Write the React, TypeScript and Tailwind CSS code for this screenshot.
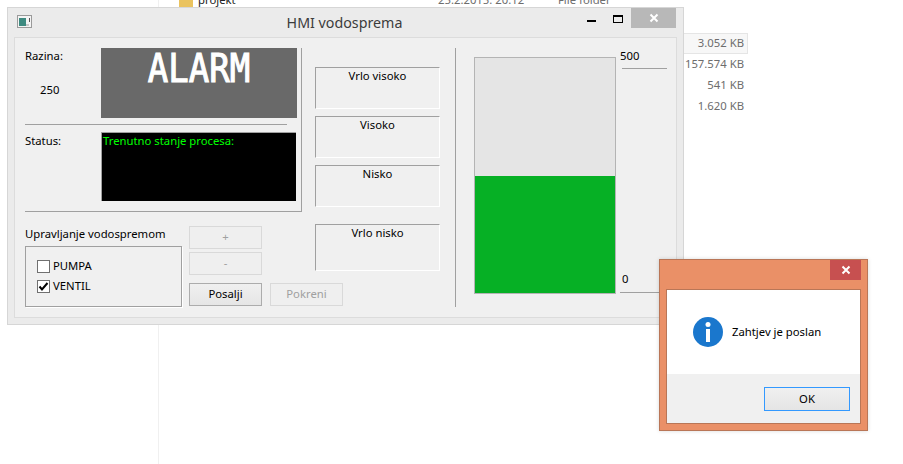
import React from "react";

const Frame = ({ label, h, className = "" }: { label: string; h: string; className?: string }) => (
  <div className={`w-[125px] ${h} border-t border-l border-t-[#a0a0a0] border-l-[#a0a0a0] border-r border-b border-r-white border-b-white text-center leading-[16px] ${className}`}>
    {label}
  </div>
);

const Btn = ({ children, disabled, className = "" }: { children: React.ReactNode; disabled?: boolean; className?: string }) => (
  <div
    className={`w-[73px] h-[23px] flex items-center justify-center border ${
      disabled ? "border-[#d9d9d9] text-[#a0a0a0] bg-[#efefef]" : "border-[#acacac] bg-gradient-to-b from-[#f0f0f0] to-[#e5e5e5] text-black"
    } ${className}`}
  >
    {children}
  </div>
);

const Check = ({ label, checked }: { label: string; checked?: boolean }) => (
  <div className="flex items-center h-[20px]">
    <div className="w-[13px] h-[13px] border border-[#707070] bg-white flex items-center justify-center mr-[3px]">
      {checked && (
        <svg width="11" height="11" viewBox="0 0 11 11">
          <path d="M1.5 5.5 L4 8.5 L9.5 2" fill="none" stroke="#000" strokeWidth="2" />
        </svg>
      )}
    </div>
    <span>{label}</span>
  </div>
);

export default function App() {
  return (
    <div className="relative w-[903px] h-[464px] bg-white overflow-hidden text-[11.3px] text-black font-['Noto_Sans','Open_Sans',sans-serif]">
      {/* explorer behind */}
      <div className="absolute left-[158px] top-0 bottom-0 w-px bg-[#f0f0f0]" />
      <div className="absolute left-[179px] top-[-3px] w-[14px] h-[10px] bg-[#eac35f]" />
      <div className="absolute left-[198px] top-[-8px] leading-[16px] text-[#222]">projekt</div>
      <div className="absolute left-[438px] top-[-8px] leading-[16px] text-[#6d6d6d]">25.2.2015. 20:12</div>
      <div className="absolute left-[558px] top-[-8px] leading-[16px] text-[#6d6d6d]">File folder</div>
      <div className="absolute left-[684px] top-[33px] w-[64px] flex flex-col items-end text-[#6d6d6d] leading-[21px]">
        <div className="w-full h-[21px] text-right pr-[3px] bg-[#f7f7f7] border border-l-0 border-[#e5e5e5] leading-[17px]">3.052 KB</div>
        <div className="pr-[4px] whitespace-nowrap -mt-px">157.574 KB</div>
        <div className="pr-[4px]">541 KB</div>
        <div className="pr-[4px]">1.620 KB</div>
      </div>

      {/* main window */}
      <div className="absolute left-[7px] top-[7px] w-[677px] h-[318px] border border-[#d6d6d6] bg-[#ebebeb] flex flex-col">
        <div className="h-[29px] flex items-start relative shrink-0">
          <svg className="absolute left-[9px] top-[7px]" width="16" height="14" viewBox="0 0 16 14">
            <rect x="0.5" y="0.5" width="14" height="12" fill="#f4f4f4" stroke="#9a9a9a" />
            <rect x="2" y="3" width="7" height="8" fill="#3d8a80" />
            <rect x="9" y="9" width="3" height="2" fill="#c8c8c8" />
            <rect x="12" y="3" width="1" height="4" fill="#555" />
          </svg>
          <div className="w-full text-center text-[14.25px] leading-[29px] text-[#3c3c3c] pr-[2px]">HMI vodosprema</div>
          <div className="absolute left-[579px] top-[12px] w-[9px] h-[2px] bg-black" />
          <div className="absolute left-[605px] top-[7px] w-[10px] h-[8px] border border-black border-t-2" />
          <div className="absolute left-[623px] top-0 w-[45px] h-[20px] bg-[#b8b8b8] flex items-center justify-center">
            <svg width="10" height="10" viewBox="0 0 10 10">
              <path d="M1.5 1.5 L8.5 8.5 M8.5 1.5 L1.5 8.5" stroke="#fff" strokeWidth="2" />
            </svg>
          </div>
        </div>

        <div className="mx-[6px] h-[281px] border border-[#dcdcdc] bg-[#f0f0f0] flex pl-[10px] pt-[10px]">
          {/* left + middle */}
          <div className="w-[415px] flex flex-col shrink-0">
            <div className="flex h-[176px]">
              <div className="w-[277px] h-[164px] border-r border-b border-[#a0a0a0] shrink-0">
                <div className="flex h-[70px]">
                  <div className="w-[76px] shrink-0 flex flex-col">
                    <div className="leading-[16px]">Razina:</div>
                    <div className="mt-[18px] pl-[15px] leading-[16px]">250</div>
                  </div>
                  <div className="w-[196px] h-[70px] bg-[#696969] flex justify-center overflow-hidden">
                    <span className="text-white text-[34px] leading-[34px] mt-px h-[34px] [-webkit-text-stroke:1px_white] font-['DejaVu_Sans_Mono',monospace] scale-y-[1.13] origin-top">ALARM</span>
                  </div>
                </div>
                <div className="w-[262px] h-px bg-[#a0a0a0] mt-[6px]" />
                <div className="flex mt-[7px]">
                  <div className="w-[76px] leading-[16px] shrink-0 pt-px">Status:</div>
                  <div className="w-[195px] h-[69px] bg-black border-l border-t border-[#a0a0a0] text-[#00ff00] leading-[16px] pl-px">Trenutno stanje procesa:</div>
                </div>
              </div>
              <div className="ml-[13px] pt-[19px] flex flex-col gap-[7px]">
                <Frame label="Vrlo visoko" h="h-[42px]" />
                <Frame label="Visoko" h="h-[42px]" />
                <Frame label="Nisko" h="h-[42px]" />
              </div>
            </div>
            <div className="flex">
              <div className="w-[157px] pt-[2px] shrink-0">
                <div className="leading-[16px]">Upravljanje vodospremom</div>
                <div className="mt-[4px] h-[61px] border border-[#a0a0a0] shadow-[1px_1px_0_0_#fff] pl-[11px] pt-[9px]">
                  <Check label="PUMPA" />
                  <Check label="VENTIL" checked />
                </div>
              </div>
              <div className="ml-[7px] pt-[2px] flex flex-col gap-[3px]">
                <Btn disabled>+</Btn>
                <Btn disabled>-</Btn>
                <Btn className="mt-[5px]">Posalji</Btn>
              </div>
              <div className="ml-[8px] flex flex-col">
                <Frame label="Vrlo nisko" h="h-[47px]" className="ml-[45px]" />
                <Btn disabled className="mt-[12px]">Pokreni</Btn>
              </div>
            </div>
          </div>

          {/* level */}
          <div className="ml-[15px] w-px h-[259px] bg-[#a0a0a0]" />
          <div className="ml-[18px] mt-[9px] w-[142px] h-[237px] border border-[#b4b4b4] bg-[#e5e5e5] flex flex-col justify-end shrink-0">
            <div className="h-[117px] bg-[#06b025]" />
          </div>
          <div className="ml-[4px] w-[47px] flex flex-col">
            <div className="leading-[16px]">500</div>
            <div className="ml-[2px] h-px w-[45px] bg-[#a0a0a0] mt-[4px]" />
            <div className="leading-[16px] ml-[2px] mt-[202px]">0</div>
            <div className="h-px w-[47px] bg-[#a0a0a0] mt-[5px]" />
          </div>
        </div>
      </div>

      {/* dialog */}
      <div className="absolute left-[659px] top-[259px] w-[209px] h-[172px] bg-[#ea9067] border border-[#b97657] shadow-[0_0_4px_rgba(0,0,0,0.15)] flex flex-col">
        <div className="h-[29px] flex justify-end pr-[6px] shrink-0">
          <div className="w-[31px] h-[20px] bg-[#c75050] flex items-center justify-center">
            <svg width="10" height="10" viewBox="0 0 10 10">
              <path d="M1.5 1.5 L8.5 8.5 M8.5 1.5 L1.5 8.5" stroke="#fff" strokeWidth="2" />
            </svg>
          </div>
        </div>
        <div className="mx-[6px] h-[135px] border border-[#b97657] bg-[#f0f0f0] flex flex-col">
          <div className="h-[84px] bg-white flex items-center pl-[26px]">
            <svg width="30" height="30" viewBox="0 0 30 30" className="shrink-0">
              <circle cx="15" cy="15" r="15" fill="#1a77cd" />
              <circle cx="15" cy="7.5" r="2.5" fill="#fff" />
              <rect x="13" y="12" width="4" height="13" fill="#fff" />
            </svg>
            <span className="ml-[9px] mt-[1px]">Zahtjev je poslan</span>
          </div>
          <div className="flex justify-end pr-[10px] pt-[13px]">
            <div className="w-[86px] h-[24px] border border-[#3399ff] bg-gradient-to-b from-[#f0f0f0] to-[#e5e5e5] flex items-center justify-center">OK</div>
          </div>
        </div>
      </div>
    </div>
  );
}
